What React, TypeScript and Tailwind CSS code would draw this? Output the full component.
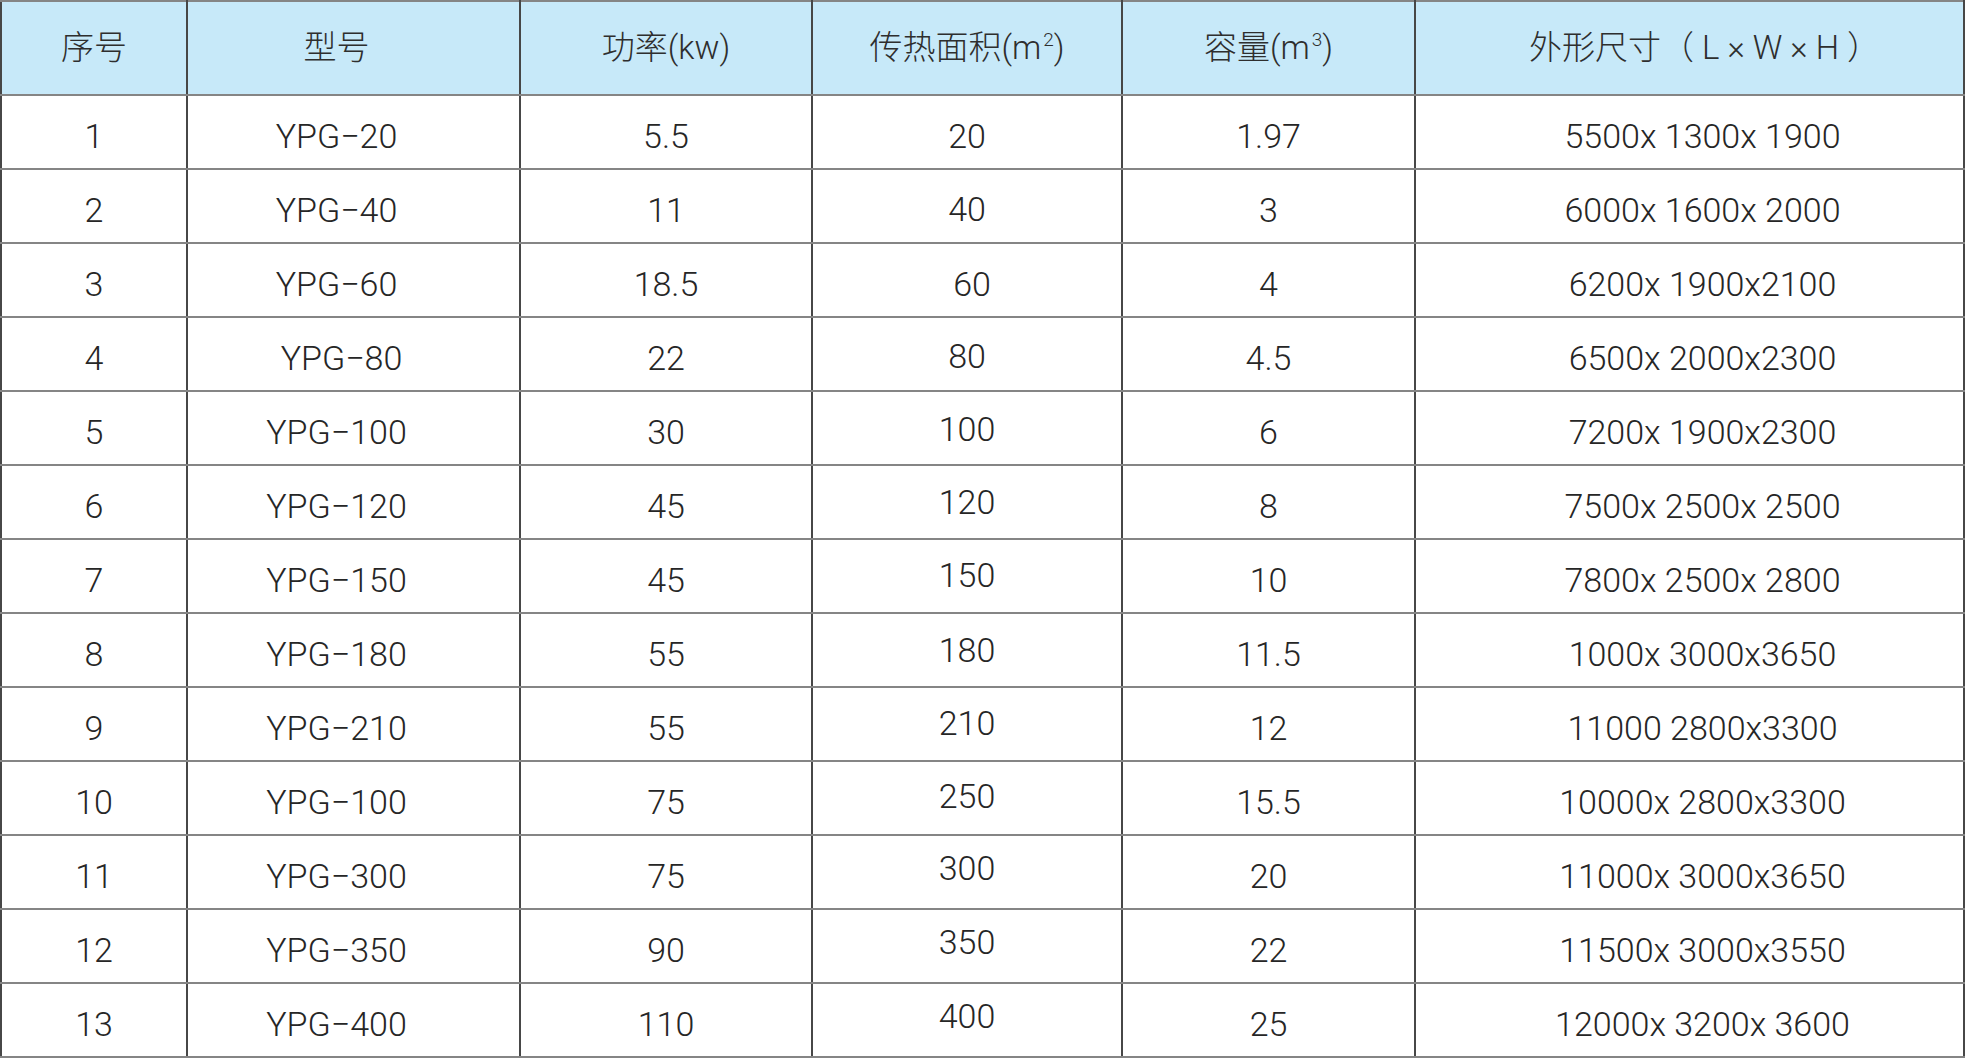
const headers = [
  { key: "no", label: <>序号</>, pad: "" },
  { key: "model", label: <>型号</>, pad: "pr-[34px]" },
  { key: "power", label: <>功率(kw)</>, pad: "" },
  {
    key: "area",
    label: (
      <>
        传热面积(m<sup className="text-[19px] -top-[13px] pl-[2px]">2</sup>)
      </>
    ),
    pad: "",
  },
  {
    key: "vol",
    label: (
      <>
        容量(m<sup className="text-[19px] -top-[13px] pl-[2px]">3</sup>)
      </>
    ),
    pad: "",
  },
  { key: "size", label: <>外形尺寸（ L × W × H ）</>, pad: "pl-[30px]" },
];

// area column drifts upward a little in the printed sheet
const rows = [
  { cells: ["1", "YPG−20", "5.5", "20", "1.97", "5500x 1300x 1900"], area: "pt-[8px]", model: "pr-[34px]" },
  { cells: ["2", "YPG−40", "11", "40", "3", "6000x 1600x 2000"], area: "pt-[6px]", model: "pr-[34px]" },
  { cells: ["3", "YPG−60", "18.5", "60", "4", "6200x 1900x2100"], area: "pt-[8px] pl-[10px]", model: "pr-[34px]" },
  { cells: ["4", "YPG−80", "22", "80", "4.5", "6500x 2000x2300"], area: "pt-[4px]", model: "pr-[24px]" },
  { cells: ["5", "YPG−100", "30", "100", "6", "7200x 1900x2300"], area: "pt-[2px]", model: "pr-[34px]" },
  { cells: ["6", "YPG−120", "45", "120", "8", "7500x 2500x 2500"], area: "pt-0", model: "pr-[34px]" },
  { cells: ["7", "YPG−150", "45", "150", "10", "7800x 2500x 2800"], area: "pb-[2px]", model: "pr-[34px]" },
  { cells: ["8", "YPG−180", "55", "180", "11.5", "1000x 3000x3650"], area: "pt-0", model: "pr-[34px]" },
  { cells: ["9", "YPG−210", "55", "210", "12", "11000 2800x3300"], area: "pb-[2px]", model: "pr-[34px]" },
  { cells: ["10", "YPG−100", "75", "250", "15.5", "10000x 2800x3300"], area: "pb-[4px]", model: "pr-[34px]" },
  { cells: ["11", "YPG−300", "75", "300", "20", "11000x 3000x3650"], area: "pb-[8px]", model: "pr-[34px]" },
  { cells: ["12", "YPG−350", "90", "350", "22", "11500x 3000x3550"], area: "pb-[8px]", model: "pr-[34px]" },
  { cells: ["13", "YPG−400", "110", "400", "25", "12000x 3200x 3600"], area: "pb-[8px]", model: "pr-[34px]" },
];

const cellBase =
  "border-x-2 border-x-[#474747] border-y-2 border-y-[#858585] text-center align-middle p-0";

export default function App() {
  return (
    <div className="min-h-screen bg-white font-[Roboto,'Noto_Sans_CJK_SC',sans-serif] font-light text-[#262626]">
      <table className="table-fixed border-collapse w-[1963px]">
        <colgroup>
          <col className="w-[186px]" />
          <col className="w-[333px]" />
          <col className="w-[292px]" />
          <col className="w-[310px]" />
          <col className="w-[293px]" />
          <col className="w-[549px]" />
        </colgroup>
        <thead>
          <tr className="h-[94px] bg-[#c7e9f9]">
            {headers.map((h) => (
              <th key={h.key} className={`${cellBase} ${h.pad} text-[33px] font-light text-[#2e2e2e]`}>
                {h.label}
              </th>
            ))}
          </tr>
        </thead>
        <tbody>
          {rows.map((r) => (
            <tr key={r.cells[0]} className="h-[74px]">
              <td className={`${cellBase} pt-[8px] text-[34px]`}>{r.cells[0]}</td>
              <td className={`${cellBase} ${r.model} pt-[8px] text-[34px]`}>{r.cells[1]}</td>
              <td className={`${cellBase} pt-[8px] text-[34px]`}>{r.cells[2]}</td>
              <td className={`${cellBase} ${r.area} text-[34px]`}>{r.cells[3]}</td>
              <td className={`${cellBase} pt-[8px] text-[34px]`}>{r.cells[4]}</td>
              <td className={`${cellBase} pl-[26px] pt-[8px] text-[34px]`}>{r.cells[5]}</td>
            </tr>
          ))}
        </tbody>
      </table>
    </div>
  );
}
